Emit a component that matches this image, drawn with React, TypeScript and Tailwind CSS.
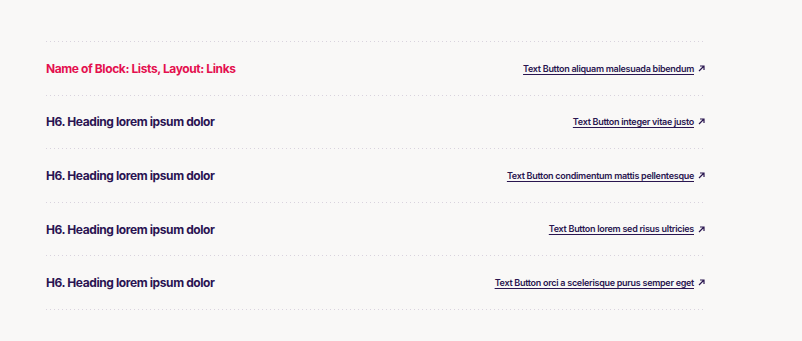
const rows = [
  { title: "Name of Block: Lists, Layout: Links", link: "Text Button aliquam malesuada bibendum", accent: true },
  { title: "H6. Heading lorem ipsum dolor", link: "Text Button integer vitae justo" },
  { title: "H6. Heading lorem ipsum dolor", link: "Text Button condimentum mattis pellentesque" },
  { title: "H6. Heading lorem ipsum dolor", link: "Text Button lorem sed risus ultricies" },
  { title: "H6. Heading lorem ipsum dolor", link: "Text Button orci a scelerisque purus semper eget" },
];

function Dots() {
  return <div className="h-px w-full bg-[linear-gradient(to_right,#d9d3de_1px,transparent_1px)] bg-[length:4px_1px]" />;
}

function Arrow() {
  return (
    <svg width="7" height="7" viewBox="0 0 7 7" fill="none" className="ml-[4px]">
      <path d="M1 6L6 1M2 1H6V5" stroke="#2a1650" strokeWidth="1.2" />
    </svg>
  );
}

export default function App() {
  return (
    <div className="w-[802px] h-[341px] bg-[#f9f8f7] pt-[41px] font-['Inter',sans-serif]">
      <div className="ml-[46px] w-[659px]">
        <Dots />
        {rows.map((r, i) => (
          <div key={i}>
            <div className="flex items-center justify-between h-[52.6px]">
              <h6 className={`pt-px text-[12px] font-bold tracking-[-0.4px] ${r.accent ? "text-[#e4104f]" : "text-[#2a1452]"}`}>
                {r.title}
              </h6>
              <a className="flex items-center text-[9px] font-semibold tracking-[-0.28px] text-[#2a1650]">
                <span className="underline underline-offset-[2px] decoration-[1px]">{r.link}</span>
                <Arrow />
              </a>
            </div>
            <Dots />
          </div>
        ))}
      </div>
    </div>
  );
}
